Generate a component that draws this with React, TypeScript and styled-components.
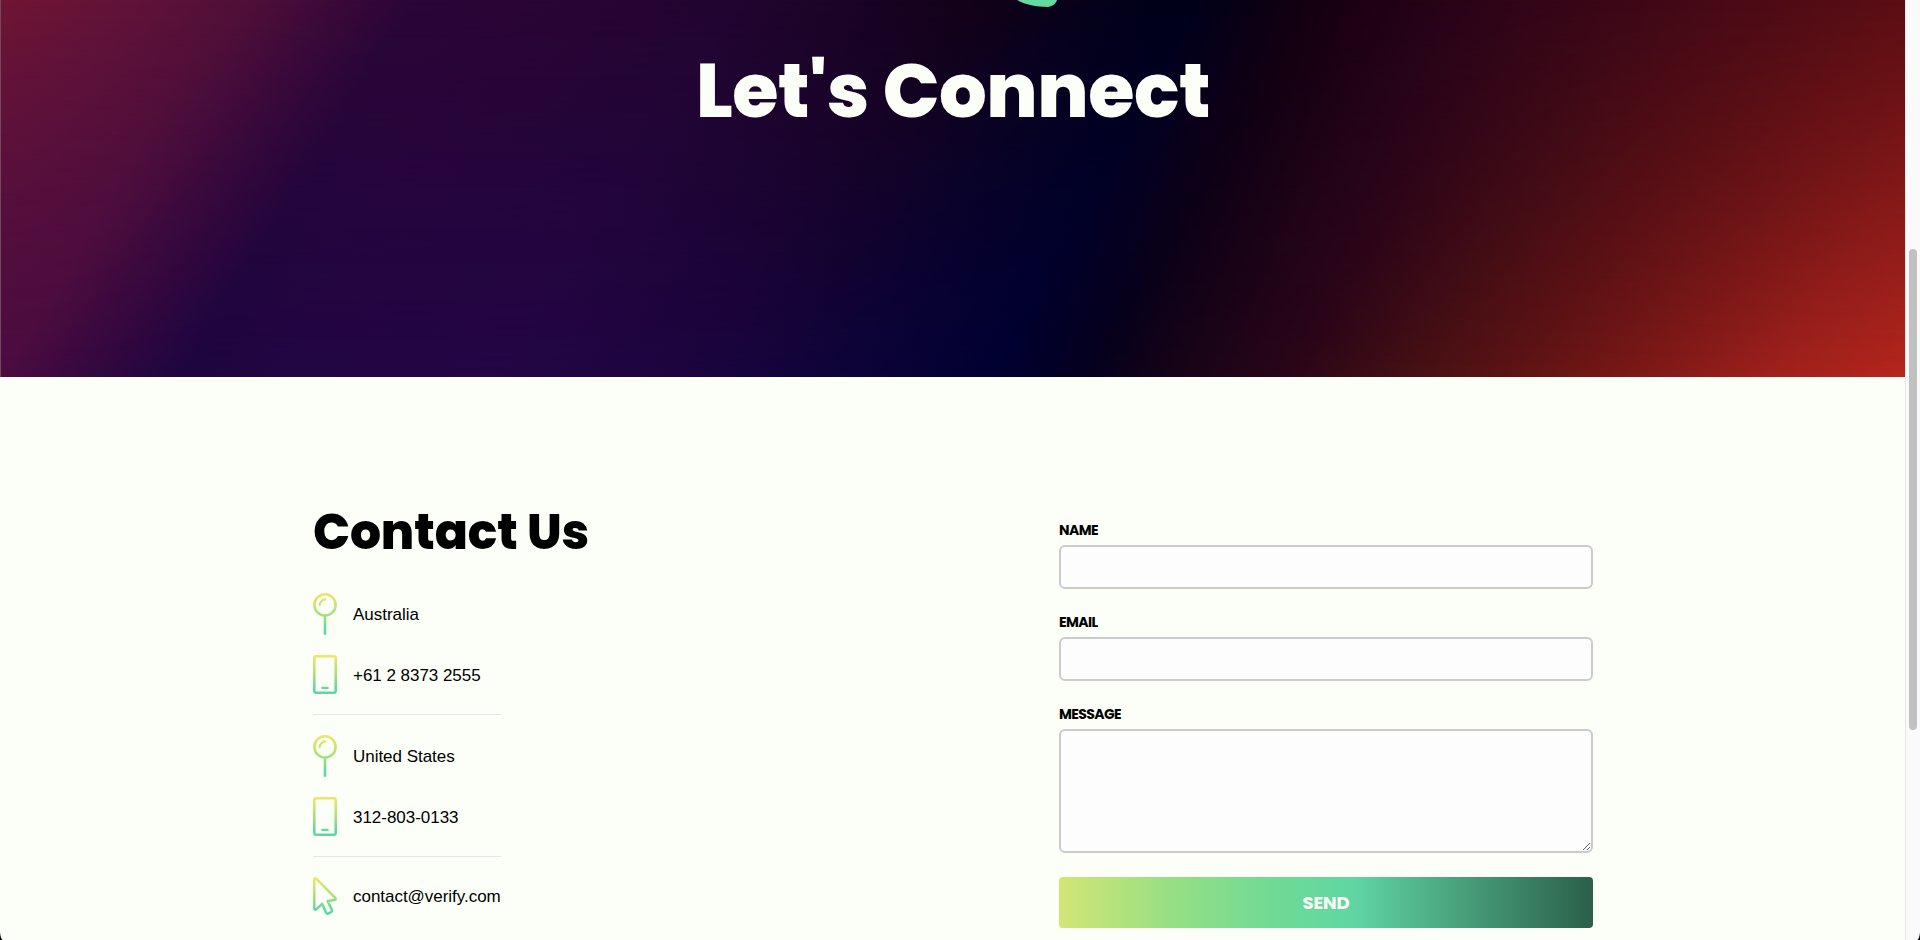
import React from "react";
import styled, { createGlobalStyle } from "styled-components";

const GlobalStyle = createGlobalStyle`
  *, *::before, *::after { box-sizing: border-box; }
  body { margin: 0; background: #fcfff7; overflow: hidden; }
`;

const display = `Poppins, Inter, "Liberation Sans", sans-serif`;

const Window = styled.div`
  position: relative;
  display: flex;
  width: 100%;
  height: 940px;
  overflow: hidden;
  background: #fcfff7;
  color: #000;
`;

const Page = styled.main`
  flex: 1;
  min-width: 0;
`;

const Hero = styled.header`
  position: relative;
  height: 377px;
  padding-top: 46px;
  text-align: center;
  overflow: hidden;
  border-left: 1px solid #6d4a5c;
  background: linear-gradient(
    120.8deg,
    #701532 0%, #621338 6%, #4e0f38 12%, #3a0938 16%, #2a0637 19.5%, #2a0535 24%,
    #220530 34.5%, #120218 46%, #05021a 51.7%, #00001a 56%, #16000f 62%,
    #2c0418 69%, #400817 77.5%, #5c0e14 89.5%, #6c1216 100%
  );

  &::before {
    content: "";
    position: absolute;
    inset: 0;
    background: linear-gradient(
      120.8deg,
      #4c0c40 10.5%, #380840 14%, #1e0540 19%, #220544 24%, #240546 33.6%,
      #1c0440 43%, #0e033a 50%, #000033 57%, #04001e 61.5%, #150318 65.2%,
      #2a0518 71%, #451014 76.8%, #621414 82.5%, #801a18 88.3%, #a0211c 94%, #b5261c 100%
    );
    mask-image: linear-gradient(to bottom, transparent, #000);
  }
`;

const HeroMark = styled.svg`
  position: absolute;
  top: 0;
  left: 1013px;
`;

const HeroTitle = styled.h1`
  position: relative;
  margin: 0;
  font: 800 75px/90px ${display};
  letter-spacing: -0.5px;
  color: #fcfff7;
`;

const Contact = styled.section`
  display: flex;
  justify-content: space-between;
  padding: 124px 312px 0 313px;
`;

const Details = styled.div`
  display: flex;
  flex-direction: column;
  align-items: flex-start;
`;

const Heading = styled.h2`
  margin: 0;
  padding: 1px 0 31px;
  font: 800 48.8px/60px ${display};
  letter-spacing: -0.1px;
`;

const ContactList = styled.div`
  display: flex;
  flex-direction: column;
  gap: 20px;
  width: 188px;
`;

const ContactRow = styled.div`
  display: flex;
  align-items: center;
  gap: 16px;
  font: 17px/24px "Liberation Sans", Arial, sans-serif;
  letter-spacing: -0.03px;
  white-space: nowrap;

  svg { display: block; flex: none; }
  span { padding-top: 2px; }
`;

const Divider = styled.hr`
  width: 100%;
  height: 1px;
  margin: 0;
  border: 0;
  background: #e5e7eb;
`;

const Form = styled.form`
  display: flex;
  flex-direction: column;
  gap: 23px;
  width: 534px;
  padding-top: 19px;
`;

const Field = styled.label`
  display: flex;
  flex-direction: column;
  gap: 5px;
  font: 700 14px/20px ${display};
  letter-spacing: -0.6px;
`;

const Input = styled.input`
  height: 44px;
  padding: 8px 12px;
  border: 2px solid #cbcbcb;
  border-radius: 6px;
  background: #fdfdfd;
  outline: none;
`;

const Message = styled.textarea`
  height: 124px;
  padding: 8px 12px;
  border: 2px solid #cbcbcb;
  border-radius: 6px;
  background: #fdfdfd;
  outline: none;
  resize: vertical;
`;

const SendButton = styled.button`
  height: 51px;
  margin-top: 1px;
  padding: 0;
  border: 0;
  border-radius: 4px;
  background: linear-gradient(90deg, #d3e575 0%, #94df85 22%, #70da95 40%, #60d6a3 55%, #2b5f4b 100%);
  color: #fcfff7;
  font: 700 18px/51px ${display};
  letter-spacing: -0.1px;
`;

const ScrollTrack = styled.div`
  width: 15px;
  padding: 249px 0 0 3px;
  border-left: 1px solid #e8e8e8;
  background: #fafafa;
`;

const ScrollThumb = styled.div`
  width: 8px;
  height: 481px;
  border-radius: 4px;
  background: #c1c1c1;
`;

const WindowCorner = styled.svg<{ $side: "left" | "right" }>`
  position: absolute;
  bottom: 0;
  ${(p) => p.$side}: 0;
`;

function Gradient({ id, height }: { id: string; height: number }) {
  return (
    <defs>
      <linearGradient id={id} gradientUnits="userSpaceOnUse" x1="0" y1="0" x2="0" y2={height}>
        <stop offset="0" stopColor="#f0e768" />
        <stop offset="0.5" stopColor="#a9e07c" />
        <stop offset="0.85" stopColor="#62d79f" />
        <stop offset="1" stopColor="#5fd6a3" />
      </linearGradient>
    </defs>
  );
}

function PinIcon({ id }: { id: string }) {
  return (
    <svg width="24" height="42" fill="none" stroke={`url(#${id})`} strokeWidth="2.6" strokeLinecap="round">
      <Gradient id={id} height={42} />
      <circle cx="12" cy="11.9" r="10.6" />
      <path d="M6.6 12C6.8 9.2 9.2 6.5 12.2 6.4" strokeWidth="2.2" />
      <path d="M11.98 23L12.02 40.7" />
    </svg>
  );
}

function PhoneIcon({ id }: { id: string }) {
  return (
    <svg width="24" height="39" fill="none" stroke={`url(#${id})`} strokeWidth="2.6" strokeLinecap="round">
      <Gradient id={id} height={39} />
      <rect x="1.3" y="1.3" width="21.4" height="36.4" rx="2" />
      <path d="M9.3 32.9L14.7 32.95" strokeWidth="2.2" />
    </svg>
  );
}

function CursorIcon({ id }: { id: string }) {
  return (
    <svg width="24" height="38" fill="none" stroke={`url(#${id})`} strokeWidth="2.5" strokeLinejoin="round">
      <Gradient id={id} height={38} />
      <path d="M1.3 2.4C1.3 1.3 2.5 .9 3.3 1.7L22.2 20.9C23 21.8 22.6 22.8 21.5 23.1L14.6 24.1L18.8 32.8C19.2 33.8 18.8 34.7 17.9 35.2L15.5 36.4C14.3 36.9 13.5 36.5 13 35.5L9.1 26.8L3.1 32.3C2.3 33 1.3 32.6 1.3 31.5Z" />
    </svg>
  );
}

export default function App() {
  return (
    <>
      <GlobalStyle />
      <Window>
        <Page>
          <Hero>
            <HeroMark width="50" height="8" aria-hidden="true">
              <path d="M3 0C12 5 22 6.8 34 6.9C39 6.5 42 3 43 0Z" fill="#64d9a0" />
            </HeroMark>
            <HeroTitle>Let's Connect</HeroTitle>
          </Hero>
          <Contact>
            <Details>
              <Heading>Contact Us</Heading>
              <ContactList>
                <ContactRow><PinIcon id="pin-au" /><span>Australia</span></ContactRow>
                <ContactRow><PhoneIcon id="phone-au" /><span>+61 2 8373 2555</span></ContactRow>
                <Divider />
                <ContactRow><PinIcon id="pin-us" /><span>United States</span></ContactRow>
                <ContactRow><PhoneIcon id="phone-us" /><span>312-803-0133</span></ContactRow>
                <Divider />
                <ContactRow><CursorIcon id="cursor" /><span>contact@verify.com</span></ContactRow>
              </ContactList>
            </Details>
            <Form onSubmit={(e) => e.preventDefault()}>
              <Field>NAME<Input type="text" /></Field>
              <Field>EMAIL<Input type="email" /></Field>
              <Field>MESSAGE<Message /></Field>
              <SendButton type="submit">SEND</SendButton>
            </Form>
          </Contact>
        </Page>
        <ScrollTrack><ScrollThumb /></ScrollTrack>
        <WindowCorner $side="left" width="3" height="8"><path d="M0 0Q.4 6 2.5 8H0Z" fill="#000" /></WindowCorner>
        <WindowCorner $side="right" width="3" height="8"><path d="M3 0Q2.6 6 .5 8H3Z" fill="#000" /></WindowCorner>
      </Window>
    </>
  );
}
